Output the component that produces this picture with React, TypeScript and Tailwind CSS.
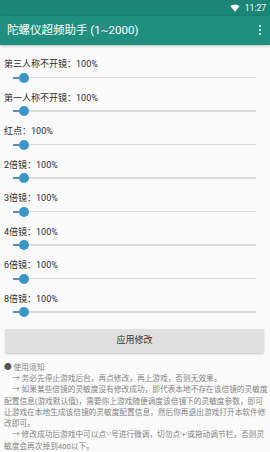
const FONT = 'Roboto, "Noto Sans CJK SC", sans-serif';

const rows = [
  "第三人称不开镜",
  "第一人称不开镜",
  "红点",
  "2倍镜",
  "3倍镜",
  "4倍镜",
  "6倍镜",
  "8倍镜",
];

const SeekBar = () => {
  return (
    <div className="h-[13px] flex items-center pl-[13px] pr-[14px]">
      <div className="w-[6px] h-[2px] bg-[#5b8db0]" />
      <div className="w-[10px] h-[10px] rounded-full bg-[#3a95c9] shrink-0" />
      <div className="flex-1 h-[1.5px] bg-[#dcdcdc]" />
    </div>
  );
};

const Row = ({ label }: { label: string }) => {
  return (
    <div className="mb-[7.5px]">
      <div className="h-[13px] leading-[13px] text-[9px] text-[#2e2e2e] pl-[4px] whitespace-nowrap">
        {label}：100%
      </div>
      <SeekBar />
    </div>
  );
};

const notes = [
  { indent: false, text: "● 使用须知:" },
  { indent: true, text: "→ 务必先停止游戏后台，再点修改，再上游戏，否则无效果。" },
  { indent: true, text: "→ 如果某些倍镜的灵敏度没有修改成功，即代表本地不存在该倍镜的灵敏度" },
  { indent: false, text: "配置信息(游戏默认值)，需要你上游戏随便调度该倍镜下的灵敏度参数，即可" },
  { indent: false, text: "让游戏在本地生成该倍镜的灵敏度配置信息，然后你再退出游戏打开本软件修" },
  { indent: false, text: "改即可。" },
  { indent: true, text: "→ 修改成功后游戏中可以点'-'号进行微调，切勿点'+'或拖动调节栏，否则灵" },
  { indent: false, text: "敏度会再次掉到400以下。" },
];

export default function App() {
  return (
    <div
      className="w-[270px] h-[452px] overflow-hidden bg-[#fafafa] flex flex-col"
      style={{ fontFamily: FONT }}
    >
      {/* status bar */}
      <div className="h-[17px] bg-[#1b8676] flex items-center justify-end pr-[4px] gap-[5px] text-white text-[8.5px]">
        <svg width="10" height="8" viewBox="0 0 18 15">
          <path d="M9 14.5 L0.5 4 C5 0.3 13 0.3 17.5 4 Z" fill="white" />
        </svg>
        <span className="leading-none">11:27</span>
      </div>

      {/* toolbar */}
      <div className="h-[31px] bg-[#1f8f7f] flex items-center justify-between pl-[7px] pr-[9px] shadow-[0_1px_3px_rgba(0,0,0,0.25)] z-10">
        <span className="text-white text-[11.5px] whitespace-nowrap">陀螺仪超频助手 (1~2000)</span>
        <div className="flex flex-col gap-[2px]">
          <div className="w-[2px] h-[2px] bg-white rounded-full" />
          <div className="w-[2px] h-[2px] bg-white rounded-full" />
          <div className="w-[2px] h-[2px] bg-white rounded-full" />
        </div>
      </div>

      {/* sliders */}
      <div className="pt-[13.5px]">
        {rows.map((r) => (
          <Row key={r} label={r} />
        ))}
      </div>

      <div className="px-[5px] pr-[6px] mt-[3px]">
        <div className="h-[24px] bg-[#e0e0e0] rounded-[2px] shadow-[0_1px_2px_rgba(0,0,0,0.2)] flex items-center justify-center text-[9px] text-[#333]">
          应用修改
        </div>
      </div>

      {/* notes */}
      <div className="mt-[8.5px] pl-[4px] text-[7.7px] leading-[11.3px] text-[#858585]">
        {notes.map((n, i) => (
          <div key={i} className={"whitespace-nowrap " + (n.indent ? "pl-[8px]" : "")}>
            {i === 0 ? (
              <>
                <span className="text-[#555]">●</span> 使用须知:
              </>
            ) : (
              n.text
            )}
          </div>
        ))}
      </div>
    </div>
  );
}
